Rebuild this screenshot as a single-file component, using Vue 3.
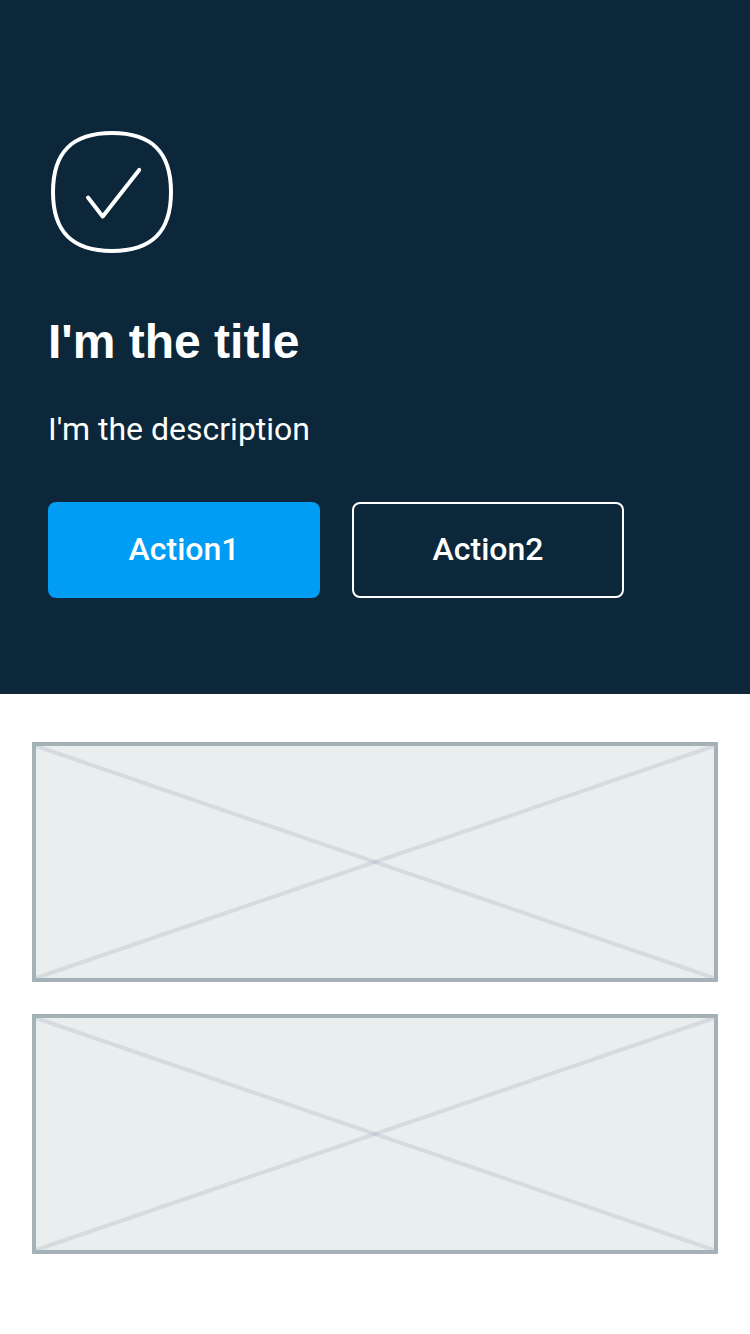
<script setup>
const placeholders = [1, 2]
</script>

<template>
  <main class="screen">
    <section class="hero">
      <svg class="icon" viewBox="0 0 128 128" fill="none" aria-hidden="true">
        <path d="M64 5C104 5 123 24 123 64S104 123 64 123S5 104 5 64S24 5 64 5Z" />
        <path class="tick" d="M40 69.6L54.7 88.4L91.2 41.9" />
      </svg>
      <h1>I'm the title</h1>
      <p>I'm the description</p>
      <div class="actions">
        <button class="primary">Action1</button>
        <button class="secondary">Action2</button>
      </div>
    </section>
    <section class="content">
      <svg v-for="item in placeholders" :key="item" class="placeholder" viewBox="0 0 686 240" aria-hidden="true">
        <rect class="fill" width="686" height="240" />
        <path d="M4 4L682 236" />
        <path d="M682 4L4 236" />
        <rect class="frame" x="2" y="2" width="682" height="236" />
      </svg>
    </section>
  </main>
</template>

<style scoped>
.screen {
  width: 750px;
  height: 1334px;
  overflow: hidden;
  background: #fff;
  font-family: Roboto, sans-serif;
}
.hero {
  box-sizing: border-box;
  height: 694px;
  padding: 128px 48px 0;
  background: #0b2739;
  color: #fff;
}
.icon {
  display: block;
  width: 128px;
  height: 128px;
  stroke: #fff;
  stroke-width: 4;
}
.tick {
  stroke-linecap: round;
  stroke-linejoin: round;
}
h1 {
  margin: 54px 0 0;
  font: 700 48px/64px "Liberation Sans", Arial, sans-serif;
}
p {
  margin: 31px 0 0;
  font-size: 32px;
  line-height: 48px;
}
.actions {
  display: flex;
  gap: 32px;
  margin-top: 49px;
}
button {
  box-sizing: border-box;
  width: 272px;
  height: 96px;
  padding: 0 0 2px;
  border: 2px solid #fff;
  border-radius: 8px;
  background: transparent;
  color: #fff;
  font: 500 32px/48px Roboto, sans-serif;
}
.primary {
  border-color: #019df4;
  background: #019df4;
}
.content {
  display: flex;
  flex-direction: column;
  gap: 32px;
  padding: 48px 32px;
}
.placeholder {
  display: block;
  width: 686px;
  height: 240px;
}
.fill {
  fill: #e9eeee;
}
.frame {
  fill: none;
  stroke: #a4b1b7;
  stroke-width: 4;
}
.placeholder path {
  stroke: #8693a6;
  stroke-opacity: 0.2;
  stroke-width: 4;
}
</style>
